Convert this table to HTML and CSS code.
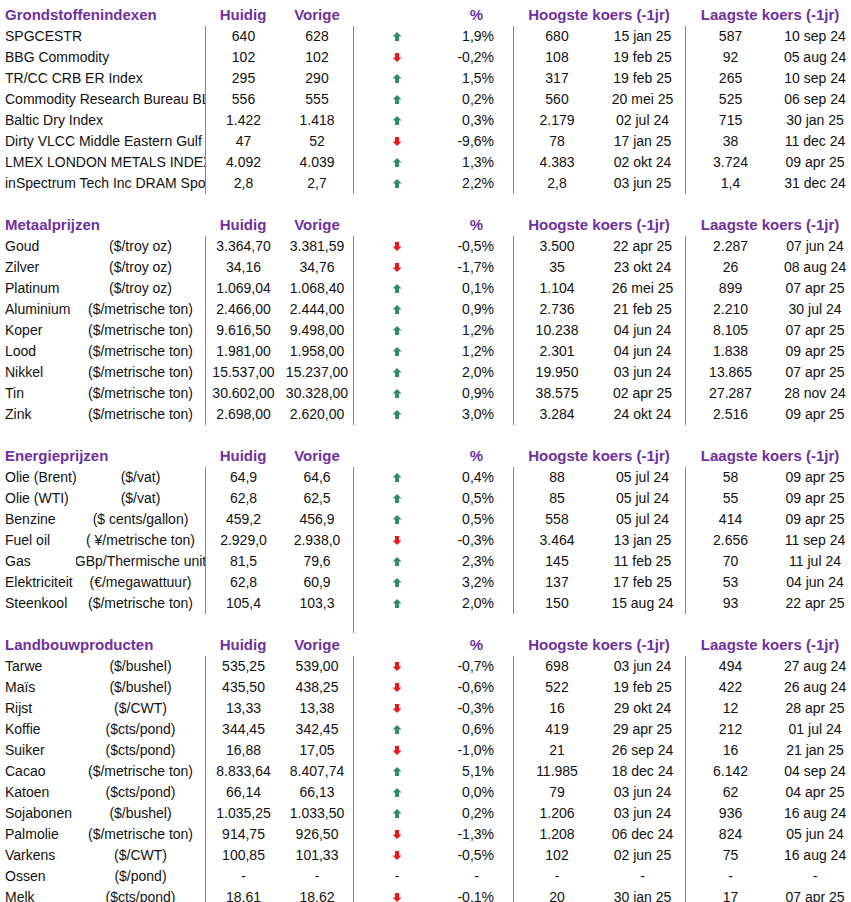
FILE: index.html
```html
<!DOCTYPE html>
<html lang="nl">
<head>
<meta charset="utf-8">
<title>Grondstoffen</title>
<link rel="stylesheet" href="styles.css">
</head>
<body>
<div class="sheet">
<table class="grid">
<colgroup>
<col class="w-a"><col class="w-b"><col class="w-c"><col class="w-d"><col class="w-e"><col class="w-f"><col class="w-g"><col class="w-h"><col class="w-i"><col class="w-j">
</colgroup>

<tbody>
<tr class="hd"><td colspan="2" class="nm">Grondstoffenindexen</td><td class="c">Huidig</td><td class="c">Vorige</td><td></td><td class="c">%</td><td colspan="2" class="c">Hoogste koers (-1jr)</td><td colspan="2" class="c">Laagste koers (-1jr)</td></tr>
<tr><td colspan="2" class="nm">SPGCESTR</td><td class="c bl">640</td><td class="c">628</td><td class="c bl"><span class="arr up"></span></td><td class="r">1,9%</td><td class="c bl">680</td><td class="c">15 jan 25</td><td class="c bl">587</td><td class="c">10 sep 24</td></tr>
<tr><td colspan="2" class="nm">BBG Commodity</td><td class="c bl">102</td><td class="c">102</td><td class="c bl"><span class="arr dn"></span></td><td class="r">-0,2%</td><td class="c bl">108</td><td class="c">19 feb 25</td><td class="c bl">92</td><td class="c">05 aug 24</td></tr>
<tr><td colspan="2" class="nm">TR/CC CRB ER Index</td><td class="c bl">295</td><td class="c">290</td><td class="c bl"><span class="arr up"></span></td><td class="r">1,5%</td><td class="c bl">317</td><td class="c">19 feb 25</td><td class="c bl">265</td><td class="c">10 sep 24</td></tr>
<tr><td colspan="2" class="nm"><div class="clip">Commodity Research Bureau BLS/US Spot Index</div></td><td class="c bl">556</td><td class="c">555</td><td class="c bl"><span class="arr up"></span></td><td class="r">0,2%</td><td class="c bl">560</td><td class="c">20 mei 25</td><td class="c bl">525</td><td class="c">06 sep 24</td></tr>
<tr><td colspan="2" class="nm">Baltic Dry Index</td><td class="c bl">1.422</td><td class="c">1.418</td><td class="c bl"><span class="arr up"></span></td><td class="r">0,3%</td><td class="c bl">2.179</td><td class="c">02 jul 24</td><td class="c bl">715</td><td class="c">30 jan 25</td></tr>
<tr><td colspan="2" class="nm"><div class="clip">Dirty VLCC Middle Eastern Gulf to Japan</div></td><td class="c bl">47</td><td class="c">52</td><td class="c bl"><span class="arr dn"></span></td><td class="r">-9,6%</td><td class="c bl">78</td><td class="c">17 jan 25</td><td class="c bl">38</td><td class="c">11 dec 24</td></tr>
<tr><td colspan="2" class="nm"><div class="clip">LMEX LONDON METALS INDEX</div></td><td class="c bl">4.092</td><td class="c">4.039</td><td class="c bl"><span class="arr up"></span></td><td class="r">1,3%</td><td class="c bl">4.383</td><td class="c">02 okt 24</td><td class="c bl">3.724</td><td class="c">09 apr 25</td></tr>
<tr><td colspan="2" class="nm"><div class="clip">inSpectrum Tech Inc DRAM Spot</div></td><td class="c bl">2,8</td><td class="c">2,7</td><td class="c bl"><span class="arr up"></span></td><td class="r">2,2%</td><td class="c bl">2,8</td><td class="c">03 jun 25</td><td class="c bl">1,4</td><td class="c">31 dec 24</td></tr>
<tr class="sp"><td colspan="10"></td></tr>
</tbody>

<tbody>
<tr class="hd"><td colspan="2" class="nm">Metaalprijzen</td><td class="c">Huidig</td><td class="c">Vorige</td><td></td><td class="c">%</td><td colspan="2" class="c">Hoogste koers (-1jr)</td><td colspan="2" class="c">Laagste koers (-1jr)</td></tr>
<tr><td class="nm">Goud</td><td class="u"><div>($/troy oz)</div></td><td class="c bl">3.364,70</td><td class="c">3.381,59</td><td class="c bl"><span class="arr dn"></span></td><td class="r">-0,5%</td><td class="c bl">3.500</td><td class="c">22 apr 25</td><td class="c bl">2.287</td><td class="c">07 jun 24</td></tr>
<tr><td class="nm">Zilver</td><td class="u"><div>($/troy oz)</div></td><td class="c bl">34,16</td><td class="c">34,76</td><td class="c bl"><span class="arr dn"></span></td><td class="r">-1,7%</td><td class="c bl">35</td><td class="c">23 okt 24</td><td class="c bl">26</td><td class="c">08 aug 24</td></tr>
<tr><td class="nm">Platinum</td><td class="u"><div>($/troy oz)</div></td><td class="c bl">1.069,04</td><td class="c">1.068,40</td><td class="c bl"><span class="arr up"></span></td><td class="r">0,1%</td><td class="c bl">1.104</td><td class="c">26 mei 25</td><td class="c bl">899</td><td class="c">07 apr 25</td></tr>
<tr><td class="nm">Aluminium</td><td class="u"><div>($/metrische ton)</div></td><td class="c bl">2.466,00</td><td class="c">2.444,00</td><td class="c bl"><span class="arr up"></span></td><td class="r">0,9%</td><td class="c bl">2.736</td><td class="c">21 feb 25</td><td class="c bl">2.210</td><td class="c">30 jul 24</td></tr>
<tr><td class="nm">Koper</td><td class="u"><div>($/metrische ton)</div></td><td class="c bl">9.616,50</td><td class="c">9.498,00</td><td class="c bl"><span class="arr up"></span></td><td class="r">1,2%</td><td class="c bl">10.238</td><td class="c">04 jun 24</td><td class="c bl">8.105</td><td class="c">07 apr 25</td></tr>
<tr><td class="nm">Lood</td><td class="u"><div>($/metrische ton)</div></td><td class="c bl">1.981,00</td><td class="c">1.958,00</td><td class="c bl"><span class="arr up"></span></td><td class="r">1,2%</td><td class="c bl">2.301</td><td class="c">04 jun 24</td><td class="c bl">1.838</td><td class="c">09 apr 25</td></tr>
<tr><td class="nm">Nikkel</td><td class="u"><div>($/metrische ton)</div></td><td class="c bl">15.537,00</td><td class="c">15.237,00</td><td class="c bl"><span class="arr up"></span></td><td class="r">2,0%</td><td class="c bl">19.950</td><td class="c">03 jun 24</td><td class="c bl">13.865</td><td class="c">07 apr 25</td></tr>
<tr><td class="nm">Tin</td><td class="u"><div>($/metrische ton)</div></td><td class="c bl">30.602,00</td><td class="c">30.328,00</td><td class="c bl"><span class="arr up"></span></td><td class="r">0,9%</td><td class="c bl">38.575</td><td class="c">02 apr 25</td><td class="c bl">27.287</td><td class="c">28 nov 24</td></tr>
<tr><td class="nm">Zink</td><td class="u"><div>($/metrische ton)</div></td><td class="c bl">2.698,00</td><td class="c">2.620,00</td><td class="c bl"><span class="arr up"></span></td><td class="r">3,0%</td><td class="c bl">3.284</td><td class="c">24 okt 24</td><td class="c bl">2.516</td><td class="c">09 apr 25</td></tr>
<tr class="sp"><td colspan="10"></td></tr>
</tbody>

<tbody>
<tr class="hd"><td colspan="2" class="nm">Energieprijzen</td><td class="c">Huidig</td><td class="c">Vorige</td><td></td><td class="c">%</td><td colspan="2" class="c">Hoogste koers (-1jr)</td><td colspan="2" class="c">Laagste koers (-1jr)</td></tr>
<tr><td class="nm">Olie (Brent)</td><td class="u"><div>($/vat)</div></td><td class="c bl">64,9</td><td class="c">64,6</td><td class="c bl"><span class="arr up"></span></td><td class="r">0,4%</td><td class="c bl">88</td><td class="c">05 jul 24</td><td class="c bl">58</td><td class="c">09 apr 25</td></tr>
<tr><td class="nm">Olie (WTI)</td><td class="u"><div>($/vat)</div></td><td class="c bl">62,8</td><td class="c">62,5</td><td class="c bl"><span class="arr up"></span></td><td class="r">0,5%</td><td class="c bl">85</td><td class="c">05 jul 24</td><td class="c bl">55</td><td class="c">09 apr 25</td></tr>
<tr><td class="nm">Benzine</td><td class="u"><div>($ cents/gallon)</div></td><td class="c bl">459,2</td><td class="c">456,9</td><td class="c bl"><span class="arr up"></span></td><td class="r">0,5%</td><td class="c bl">558</td><td class="c">05 jul 24</td><td class="c bl">414</td><td class="c">09 apr 25</td></tr>
<tr><td class="nm">Fuel oil</td><td class="u"><div>( ¥/metrische ton)</div></td><td class="c bl">2.929,0</td><td class="c">2.938,0</td><td class="c bl"><span class="arr dn"></span></td><td class="r">-0,3%</td><td class="c bl">3.464</td><td class="c">13 jan 25</td><td class="c bl">2.656</td><td class="c">11 sep 24</td></tr>
<tr><td class="nm">Gas</td><td class="u"><div>(GBp/Thermische unit)</div></td><td class="c bl">81,5</td><td class="c">79,6</td><td class="c bl"><span class="arr up"></span></td><td class="r">2,3%</td><td class="c bl">145</td><td class="c">11 feb 25</td><td class="c bl">70</td><td class="c">11 jul 24</td></tr>
<tr><td class="nm">Elektriciteit</td><td class="u"><div>(€/megawattuur)</div></td><td class="c bl">62,8</td><td class="c">60,9</td><td class="c bl"><span class="arr up"></span></td><td class="r">3,2%</td><td class="c bl">137</td><td class="c">17 feb 25</td><td class="c bl">53</td><td class="c">04 jun 24</td></tr>
<tr><td class="nm">Steenkool</td><td class="u"><div>($/metrische ton)</div></td><td class="c bl">105,4</td><td class="c">103,3</td><td class="c bl"><span class="arr up"></span></td><td class="r">2,0%</td><td class="c bl">150</td><td class="c">15 aug 24</td><td class="c bl">93</td><td class="c">22 apr 25</td></tr>
<tr class="sp"><td colspan="4"></td><td class="bl"></td><td colspan="5"></td></tr>
</tbody>

<tbody>
<tr class="hd"><td colspan="2" class="nm">Landbouwproducten</td><td class="c">Huidig</td><td class="c">Vorige</td><td></td><td class="c">%</td><td colspan="2" class="c">Hoogste koers (-1jr)</td><td colspan="2" class="c">Laagste koers (-1jr)</td></tr>
<tr><td class="nm">Tarwe</td><td class="u"><div>($/bushel)</div></td><td class="c bl">535,25</td><td class="c">539,00</td><td class="c bl"><span class="arr dn"></span></td><td class="r">-0,7%</td><td class="c bl">698</td><td class="c">03 jun 24</td><td class="c bl">494</td><td class="c">27 aug 24</td></tr>
<tr><td class="nm">Maïs</td><td class="u"><div>($/bushel)</div></td><td class="c bl">435,50</td><td class="c">438,25</td><td class="c bl"><span class="arr dn"></span></td><td class="r">-0,6%</td><td class="c bl">522</td><td class="c">19 feb 25</td><td class="c bl">422</td><td class="c">26 aug 24</td></tr>
<tr><td class="nm">Rijst</td><td class="u"><div>($/CWT)</div></td><td class="c bl">13,33</td><td class="c">13,38</td><td class="c bl"><span class="arr dn"></span></td><td class="r">-0,3%</td><td class="c bl">16</td><td class="c">29 okt 24</td><td class="c bl">12</td><td class="c">28 apr 25</td></tr>
<tr><td class="nm">Koffie</td><td class="u"><div>($cts/pond)</div></td><td class="c bl">344,45</td><td class="c">342,45</td><td class="c bl"><span class="arr up"></span></td><td class="r">0,6%</td><td class="c bl">419</td><td class="c">29 apr 25</td><td class="c bl">212</td><td class="c">01 jul 24</td></tr>
<tr><td class="nm">Suiker</td><td class="u"><div>($cts/pond)</div></td><td class="c bl">16,88</td><td class="c">17,05</td><td class="c bl"><span class="arr dn"></span></td><td class="r">-1,0%</td><td class="c bl">21</td><td class="c">26 sep 24</td><td class="c bl">16</td><td class="c">21 jan 25</td></tr>
<tr><td class="nm">Cacao</td><td class="u"><div>($/metrische ton)</div></td><td class="c bl">8.833,64</td><td class="c">8.407,74</td><td class="c bl"><span class="arr up"></span></td><td class="r">5,1%</td><td class="c bl">11.985</td><td class="c">18 dec 24</td><td class="c bl">6.142</td><td class="c">04 sep 24</td></tr>
<tr><td class="nm">Katoen</td><td class="u"><div>($cts/pond)</div></td><td class="c bl">66,14</td><td class="c">66,13</td><td class="c bl"><span class="arr up"></span></td><td class="r">0,0%</td><td class="c bl">79</td><td class="c">03 jun 24</td><td class="c bl">62</td><td class="c">04 apr 25</td></tr>
<tr><td class="nm">Sojabonen</td><td class="u"><div>($/bushel)</div></td><td class="c bl">1.035,25</td><td class="c">1.033,50</td><td class="c bl"><span class="arr up"></span></td><td class="r">0,2%</td><td class="c bl">1.206</td><td class="c">03 jun 24</td><td class="c bl">936</td><td class="c">16 aug 24</td></tr>
<tr><td class="nm">Palmolie</td><td class="u"><div>($/metrische ton)</div></td><td class="c bl">914,75</td><td class="c">926,50</td><td class="c bl"><span class="arr dn"></span></td><td class="r">-1,3%</td><td class="c bl">1.208</td><td class="c">06 dec 24</td><td class="c bl">824</td><td class="c">05 jun 24</td></tr>
<tr><td class="nm">Varkens</td><td class="u"><div>($/CWT)</div></td><td class="c bl">100,85</td><td class="c">101,33</td><td class="c bl"><span class="arr dn"></span></td><td class="r">-0,5%</td><td class="c bl">102</td><td class="c">02 jun 25</td><td class="c bl">75</td><td class="c">16 aug 24</td></tr>
<tr><td class="nm">Ossen</td><td class="u"><div>($/pond)</div></td><td class="c bl">-</td><td class="c">-</td><td class="c bl">-</td><td class="c">-</td><td class="c bl">-</td><td class="c">-</td><td class="c bl">-</td><td class="c">-</td></tr>
<tr><td class="nm">Melk</td><td class="u"><div>($cts/pond)</div></td><td class="c bl">18,61</td><td class="c">18,62</td><td class="c bl"><span class="arr dn"></span></td><td class="r">-0,1%</td><td class="c bl">20</td><td class="c">30 jan 25</td><td class="c bl">17</td><td class="c">07 apr 25</td></tr>
</tbody>
</table>
</div>
</body>
</html>
```

FILE: styles.css
```css
html, body {
  margin: 0;
  padding: 0;
  background: #ffffff;
}

body {
  font-family: "Liberation Sans", Arial, sans-serif;
  font-size: 14px;
  color: #111111;
}

.sheet {
  width: 851px;
  overflow: hidden;
  padding-top: 3px;
}

.grid {
  table-layout: fixed;
  border-collapse: separate;
  border-spacing: 0;
  width: 855px;
}

.w-a { width: 76px; }
.w-b { width: 129px; }
.w-c { width: 76px; }
.w-d { width: 72px; }
.w-e { width: 87px; }
.w-f { width: 73px; }
.w-g { width: 87px; }
.w-h { width: 85px; }
.w-i { width: 90px; }
.w-j { width: 80px; }

.grid td {
  padding: 0;
  height: 21px;
  line-height: 21px;
  white-space: nowrap;
  overflow: hidden;
  vertical-align: middle;
  box-sizing: border-box;
}

.grid tr.hd td {
  height: 23px;
  line-height: 23px;
  font-size: 15px;
  font-weight: bold;
  color: #7030a0;
}

.grid tr.sp td {
  height: 19px;
  line-height: 19px;
}

.nm {
  padding-left: 5px !important;
  text-align: left;
}

.clip {
  width: 200px;
  overflow: hidden;
  white-space: nowrap;
}

.u div {
  display: flex;
  justify-content: center;
  white-space: nowrap;
}

.c {
  text-align: center;
}

.r {
  text-align: right;
  padding-right: 19px !important;
}

.bl {
  border-left: 1px solid #8a8a8a;
}

.arr {
  display: inline-block;
  width: 9px;
  height: 9px;
  vertical-align: 0;
}

.arr.up {
  background: #2e8d62;
  clip-path: polygon(50% 0, 100% 50%, 72% 50%, 72% 100%, 28% 100%, 28% 50%, 0 50%);
}

.arr.dn {
  background: #ee1616;
  clip-path: polygon(28% 0, 72% 0, 72% 50%, 100% 50%, 50% 100%, 0 50%, 28% 50%);
}
```
